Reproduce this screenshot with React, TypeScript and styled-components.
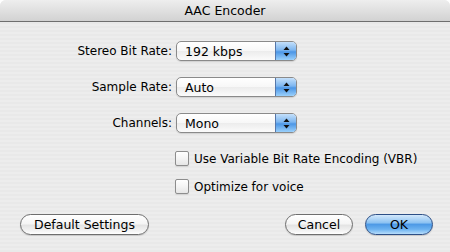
import React, { ReactElement } from "react";
import styled, { createGlobalStyle } from "styled-components";

const texts = {
  title: "AAC Encoder",
  bitRateLabel: "Stereo Bit Rate:",
  bitRate: "192 kbps",
  sampleRateLabel: "Sample Rate:",
  sampleRate: "Auto",
  channelsLabel: "Channels:",
  channels: "Mono",
  vbr: "Use Variable Bit Rate Encoding (VBR)",
  voice: "Optimize for voice",
  defaults: "Default Settings",
  cancel: "Cancel",
  ok: "OK",
};

const GlobalStyle = createGlobalStyle`
  html, body {
    margin: 0;
    padding: 0;
    background: #ffffff;
  }
  body {
    font-family: "DejaVu Sans", "Liberation Sans", sans-serif;
    font-size: 12px;
    color: #000;
  }
`;

const Window = styled.div`
  width: 450px;
  height: 252px;
  display: flex;
  flex-direction: column;
  border-radius: 6px 6px 0 0;
  overflow: hidden;
  background: repeating-linear-gradient(
    to bottom,
    #ededed 0px,
    #ededed 2px,
    #e9e9e9 2px,
    #e9e9e9 4px
  );
`;

const TitleBar = styled.div`
  height: 21px;
  flex: none;
  display: flex;
  align-items: center;
  justify-content: center;
  background: linear-gradient(to bottom, #eeeeee 0%, #e0e0e0 50%, #d2d2d2 100%);
  border-bottom: 1px solid #6f6f6f;
  font-size: 12.5px;
`;

const Body = styled.div`
  flex: 1;
  display: flex;
  flex-direction: column;
  padding: 19px 0 0 0;
`;

const FormGrid = styled.div`
  display: grid;
  grid-template-columns: 172px 121px;
  column-gap: 4px;
  row-gap: 16px;
  align-items: center;
`;

const Label = styled.span`
  text-align: right;
`;

const Popup = styled.div`
  height: 18px;
  display: flex;
  align-items: stretch;
  border: 1px solid #8a8a8a;
  border-radius: 5px;
  overflow: hidden;
  box-shadow: 0 1px 1px rgba(0, 0, 0, 0.12);
  background: linear-gradient(to bottom, #ffffff 0%, #f7f7f7 50%, #ececec 51%, #fbfbfb 100%);
`;

const PopupValue = styled.span`
  flex: 1;
  display: flex;
  align-items: center;
  padding-left: 8px;
  font-size: 12.5px;
`;

const PopupArrows = styled.span`
  width: 20px;
  display: flex;
  align-items: center;
  justify-content: center;
  border-left: 1px solid #5577aa;
  background: linear-gradient(to bottom, #c4e0fb 0%, #7db6f0 45%, #4c96e6 55%, #9ad0fb 100%);
`;

const Checks = styled.div`
  display: flex;
  flex-direction: column;
  gap: 13px;
  margin: 18px 0 0 175px;
`;

const CheckRow = styled.label`
  display: flex;
  align-items: center;
  gap: 5px;
  height: 15px;
`;

const CheckBox = styled.span`
  width: 12px;
  height: 13px;
  border: 1px solid #8d8d8d;
  border-radius: 2px;
  background: linear-gradient(to bottom, #ffffff 0%, #f4f4f4 50%, #e6e6e6 100%);
  box-shadow: 0 1px 1px rgba(0, 0, 0, 0.1);
`;

const ButtonBar = styled.div`
  display: flex;
  align-items: center;
  margin-top: 20px;
  padding: 0 17px 0 20px;
`;

const Spacer = styled.div`
  flex: 1;
`;

const PillButton = styled.button<{ $primary?: boolean; $width: number }>`
  width: ${(p) => p.$width}px;
  height: 21px;
  margin-left: ${(p) => (p.$primary ? "12px" : "0")};
  border-radius: 11px;
  font-family: inherit;
  font-size: 12.5px;
  color: #000;
  padding: 0;
  border: 1px solid ${(p) => (p.$primary ? "#2d4f86" : "#6e6e6e")};
  background: ${(p) =>
    p.$primary
      ? "linear-gradient(to bottom, #d3e8fb 0%, #8ec3f2 40%, #4e9ae6 50%, #6cb2f0 75%, #b7ddfb 100%)"
      : "linear-gradient(to bottom, #ffffff 0%, #f5f5f5 45%, #e4e4e4 55%, #f4f4f4 85%, #ffffff 100%)"};
  box-shadow: 0 1px 1px rgba(0, 0, 0, 0.15);
`;

const Arrows = (): ReactElement => (
  <svg width="7" height="11" viewBox="0 0 7 11">
    <path d="M3.5 0.5 L6.5 4 L0.5 4 Z" fill="#111" />
    <path d="M3.5 10.5 L6.5 7 L0.5 7 Z" fill="#111" />
  </svg>
);

const PopupField = ({ label, value }: { label: string; value: string }): ReactElement => (
  <>
    <Label>{label}</Label>
    <Popup>
      <PopupValue>{value}</PopupValue>
      <PopupArrows>
        <Arrows />
      </PopupArrows>
    </Popup>
  </>
);

const App = (): ReactElement => (
  <>
    <GlobalStyle />
    <Window>
      <TitleBar>{texts.title}</TitleBar>
      <Body>
        <FormGrid>
          <PopupField label={texts.bitRateLabel} value={texts.bitRate} />
          <PopupField label={texts.sampleRateLabel} value={texts.sampleRate} />
          <PopupField label={texts.channelsLabel} value={texts.channels} />
        </FormGrid>
        <Checks>
          <CheckRow>
            <CheckBox />
            {texts.vbr}
          </CheckRow>
          <CheckRow>
            <CheckBox />
            {texts.voice}
          </CheckRow>
        </Checks>
        <ButtonBar>
          <PillButton $width={129}>{texts.defaults}</PillButton>
          <Spacer />
          <PillButton $width={68}>{texts.cancel}</PillButton>
          <PillButton $primary $width={68}>
            {texts.ok}
          </PillButton>
        </ButtonBar>
      </Body>
    </Window>
  </>
);

export default App;
